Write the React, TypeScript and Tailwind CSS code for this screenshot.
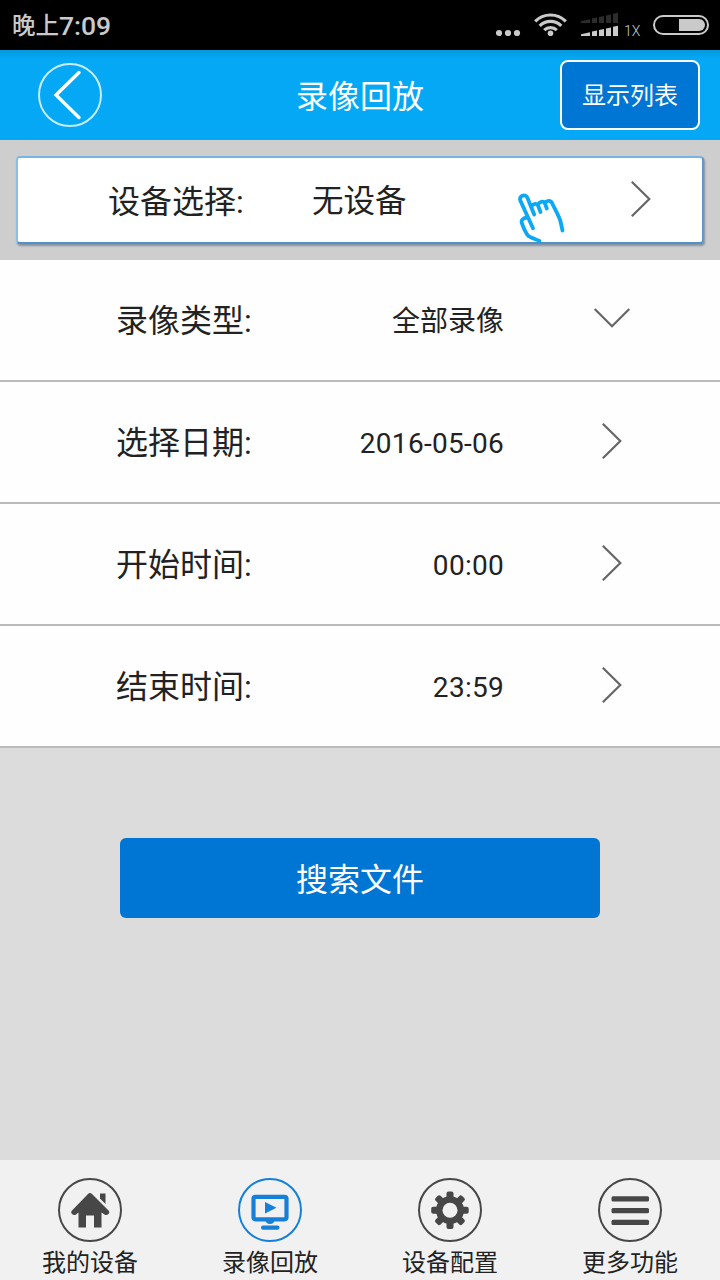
import type { ReactNode } from 'react';

const rows = [
  { label: '录像类型:', value: '全部录像', open: true },
  { label: '选择日期:', value: '2016-05-06', open: false },
  { label: '开始时间:', value: '00:00', open: false },
  { label: '结束时间:', value: '23:59', open: false },
];

function Chevron({ down = false }: { down?: boolean }) {
  return (
    <svg className="w-10 h-10 shrink-0" viewBox="0 0 40 40" fill="none" stroke="#666" strokeWidth="2.2">
      {down ? <path d="M2.7 10 20 27.3 37.3 10" /> : <path d="M10.8 2.7 28.3 20 10.8 37.3" />}
    </svg>
  );
}

function StatusBar() {
  return (
    <div className="h-[50px] bg-black flex items-center justify-between pl-3 pr-[11px] text-[#cacaca]">
      <div className="flex items-center font-medium pt-[2px]">
        <span className="text-[23.5px] leading-[48px]">晚上</span>
        <span className="text-[26.5px] leading-[48px]">7:09</span>
      </div>
      <svg className="w-[213px] h-[50px]" viewBox="496 0 213 50" fill="#cacaca">
        <circle cx="499" cy="33" r="3.1" />
        <circle cx="508" cy="33" r="3.1" />
        <circle cx="517" cy="33" r="3.1" />
        {/* wifi */}
        <g fill="none" stroke="#cacaca" strokeWidth="3.2">
          <path d="M535.2 21.4a21.5 21.5 0 0 1 30.6 0" />
          <path d="M539.7 25.8a15.2 15.2 0 0 1 21.6 0" />
          <path d="M544.2 30.2a9 9 0 0 1 12.6 0" />
        </g>
        <circle cx="550.5" cy="33.3" r="2.8" />
        {/* signal */}
        <g fill="#2c2c2c">
          <path d="M581 21.2l9-2V23h-9z" />
          <path d="M592 18.4l5-1V23h-5z" />
          <path d="M599 16.9l5-1V23h-5z" />
          <path d="M606 15.4l5-1V23h-5z" />
          <path d="M613 13.8l5-1V23h-5z" />
        </g>
        <path d="M581 34.2l9-2V36h-9z" />
        <path d="M592 31.4l5-1V36h-5z" />
        <path d="M599 29.9l5-1V36h-5z" />
        <path d="M606 28.4l5-1V36h-5z" />
        <path d="M613 26.8l5-1V36h-5z" />
        <text x="624" y="36" fontSize="14" fontWeight="300">1X</text>
        {/* battery */}
        <rect x="654" y="16" width="54" height="18" rx="9" fill="none" stroke="#cacaca" strokeWidth="2" />
        <path d="M679 19h20a6 6 0 0 1 0 12h-20z" />
      </svg>
    </div>
  );
}

function Header() {
  return (
    <header className="h-[90px] bg-linear-to-b from-[#0599dc] from-0% to-[#04a8f5] to-10% flex items-center justify-between pl-[38px] pr-5 text-white">
      <div className="w-[140px]">
        <svg className="w-16 h-16" viewBox="0 0 64 64" fill="none">
          <circle cx="32" cy="32" r="31" stroke="#c7ecfd" strokeWidth="2" />
          <path d="M41 9.5 18 32l23 22.5" stroke="#fff" strokeWidth="3.4" strokeLinecap="round" />
        </svg>
      </div>
      <h1 className="text-[32px] leading-[48px] pt-[3px] pr-[19px] ml-[1px]">录像回放</h1>
      <button className="w-[140px] h-[70px] rounded-lg border-2 border-white bg-[#0076d4] text-2xl pt-[2px]">
        显示列表
      </button>
    </header>
  );
}

function DeviceSelect() {
  return (
    <div className="h-[120px] bg-[#cecece] p-4">
      <div className="h-[88px] bg-white border-2 border-t-[#7ab4e3] border-l-[#8dbfe5] border-r-[#5e9acb] border-b-[#5590c4] rounded-sm shadow-[1px_2px_2px_rgba(60,90,120,0.5)] flex items-center pl-[90px] pr-[41px]">
        <span className="w-[204px] text-[32px] pt-[3px]">设备选择:</span>
        <span className="w-[204px] text-[31.5px] pt-[3px]">无设备</span>
        <svg
          className="w-[52px] h-[52px] mt-[36px] shrink-0"
          viewBox="516 192 52 52"
          fill="none"
          stroke="#0ba9f5"
          strokeWidth="3.8"
          strokeLinecap="round"
          strokeLinejoin="round"
        >
          <path d="M533 228.3 520.3 200.5C518.5 196.2 525 193 527.3 197.5L534.2 214.5" />
          <path d="M531.5 206.5c1.5-3 5.500-3.500 6.500-1l2.500 6.500" />
          <path d="M538 204.500c2-3.500 6-3.800 7 -1l1.800 5" />
          <path d="M545 202.500c3-2.300 6-2.500 7.500 1.500 2.800 6 6.500 12 8 17.500l2 9" />
          <path d="M527 217.500c-4.500.5-6.300 3-5 6 1.500 4 3 8.500 6 12 2 2.200 7.500 3.500 11.500 5.500" />
        </svg>
        <div className="ml-auto -mt-[3px]">
          <Chevron />
        </div>
      </div>
    </div>
  );
}

function TabIcon({ color, children }: { color: string; children: ReactNode }) {
  return (
    <svg className="w-16 h-16" viewBox="0 0 64 64" fill={color}>
      <circle cx="32" cy="32" r="31" fill="none" stroke={color} strokeWidth="2" />
      {children}
    </svg>
  );
}

const tabs = [
  {
    label: '我的设备',
    color: '#474747',
    icon: (
      <>
        <path d="M42 15.500h5.500V26L42 20.500z" />
        <path d="M30 16q2-1.800 4 0l17 17q1 1.500-.5 3-2 1.800-4 .5L43.500 34.500v15H36v-12h-8v12h-7.500v-15L18 36.500q-2 1.300-4-.5-1.500-1.500-.5-3z" />
      </>
    ),
  },
  {
    label: '录像回放',
    color: '#1680d8',
    icon: (
      <>
        <rect x="15.500" y="18.800" width="33" height="22.500" rx="2" fill="none" stroke="#1680d8" strokeWidth="4.200" />
        <path d="M27 24l11.500 5.800L27 35.500z" />
        <path d="M27.500 42h9q-.5 4-4.500 4t-4.500-4z" />
        <rect x="23" y="47.500" width="18.500" height="4.200" rx="2" />
      </>
    ),
  },
  {
    label: '设备配置',
    color: '#474747',
    icon: (
      <>
        {[0, 45, 90, 135].map((deg) => (
          <rect key={deg} x="28.500" y="13.500" width="7" height="37.500" rx="2" transform={`rotate(${deg} 32 32.200)`} />
        ))}
        <circle cx="32" cy="32.200" r="14" />
        <circle cx="32" cy="32.200" r="7.500" fill="#f1f1f1" />
      </>
    ),
  },
  {
    label: '更多功能',
    color: '#474747',
    icon: (
      <>
        <rect x="13.500" y="18.300" width="37.500" height="5.200" rx="1.500" />
        <rect x="13.500" y="30" width="37.500" height="5.200" rx="1.500" />
        <rect x="13.500" y="41.700" width="37.500" height="5.200" rx="1.500" />
      </>
    ),
  },
];

export default function App() {
  return (
    <div className="w-[720px] h-[1280px] flex flex-col overflow-hidden bg-[#dcdcdc] text-[#222] font-[Roboto,'Noto_Sans_CJK_SC',sans-serif]">
      <StatusBar />
      <Header />
      <DeviceSelect />

      <div>
        {rows.map((row) => (
          <div key={row.label} className="h-[122px] bg-[#fefefe] border-b-2 border-[#bababa] flex items-center pl-[116px] pr-[88px]">
            <span className="text-[32px] pt-[2px]">{row.label}</span>
            <span className="flex-1 text-right text-[28px] pr-[88px] pt-1">
              <span className={row.open ? '' : 'tracking-[0.28px]'}>{row.value}</span>
            </span>
            <div className="-mt-[2px]">
              <Chevron down={row.open} />
            </div>
          </div>
        ))}
      </div>

      <main className="flex-1 pt-[90px] flex justify-center items-start">
        <button className="w-[480px] h-20 rounded-md bg-[#0076d4] text-white text-[32px] pt-[3px]">搜索文件</button>
      </main>

      <nav className="h-[120px] bg-[#f1f1f1] grid grid-cols-4">
        {tabs.map((tab) => (
          <div key={tab.label} className="flex flex-col items-center pt-[18px]">
            <TabIcon color={tab.color}>{tab.icon}</TabIcon>
            <span className="text-2xl leading-[40px] mt-[1px]">{tab.label}</span>
          </div>
        ))}
      </nav>
    </div>
  );
}
